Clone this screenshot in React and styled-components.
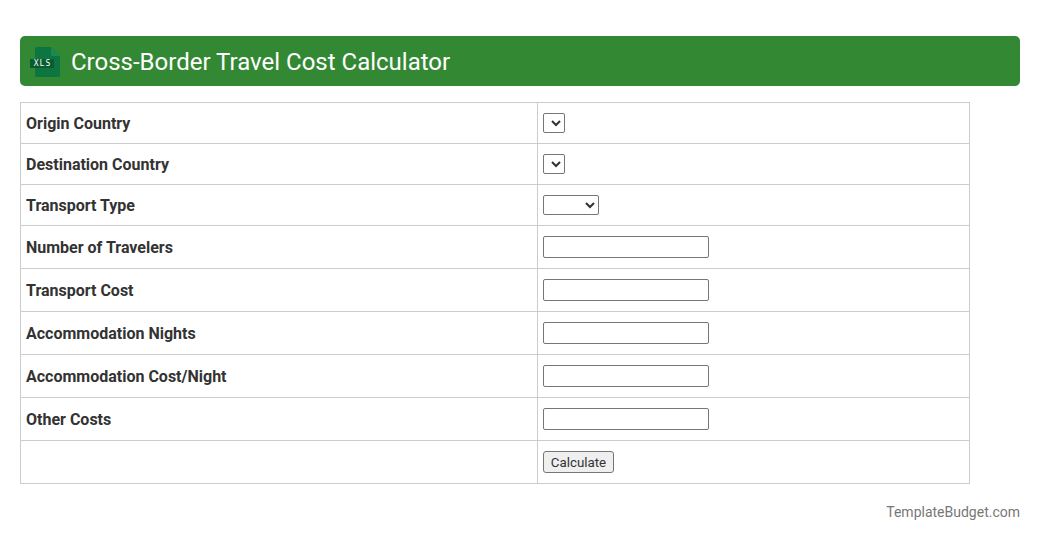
import React from "react";
import styled, { createGlobalStyle } from "styled-components";

const GlobalStyle = createGlobalStyle`
  html, body {
    margin: 0;
    padding: 0;
    background: #fff;
    color: #333;
    font-family: Roboto, "Liberation Sans", sans-serif;
  }
`;

const Page = styled.div`
  padding: 36px 20px 0;
  height: 541px;
  box-sizing: border-box;
  overflow: hidden;
`;

const Header = styled.h1`
  display: flex;
  align-items: center;
  gap: 9px;
  height: 50px;
  margin: 0 0 16px;
  padding-left: 10px;
  background: #338833;
  border-radius: 5px;
  color: #fff;
  font-size: 24px;
  font-weight: 400;
`;

const HeaderText = styled.span`
  padding-top: 2px;
`;

const Table = styled.table`
  width: 950px;
  border-collapse: collapse;
  table-layout: fixed;
`;

const Cell = styled.td`
  border: 1px solid #ccc;
  padding: 0 5px;
  height: ${props => props.$h}px;
  box-sizing: border-box;
  font-size: 16px;
  line-height: 20px;
`;

const LabelCell = styled(Cell)`
  width: 517px;
  padding-top: 2px;
  font-weight: 700;
  color: #333;
`;

const Select = styled.select`
  display: block;
  width: ${props => props.$w}px;
  height: 20px;
  padding: 0;
  font-size: 13.33px;
  font-family: Arial, "Liberation Sans", sans-serif;
  color: #333;
  background: #fff;
  border: 1px solid #767676;
  border-radius: 2px;
`;

const Input = styled.input`
  display: block;
  width: 166px;
  height: 22px;
  box-sizing: border-box;
  padding: 1px 2px;
  background: #fff;
  border: 1px solid #767676;
  border-radius: 2px;
`;

const Button = styled.button`
  display: block;
  height: 22px;
  width: 71px;
  padding: 0;
  font-family: Roboto, sans-serif;
  font-size: 13.33px;
  color: #333;
  background: #efefef;
  border: 1px solid #767676;
  border-radius: 3px;
`;

const Footer = styled.div`
  margin-top: 19px;
  text-align: right;
  font-size: 14px;
  line-height: 18px;
  color: #777;
`;

const XlsIcon = () => (
  <svg width="32" height="32" viewBox="0 0 32 32" aria-hidden="true">
    <path d="M5 3.500A1.500 1.500 0 0 1 6.500 2H21l9 9v19.500a1.500 1.500 0 0 1-1.500 1.500h-22A1.500 1.500 0 0 1 5 30.500z" fill="#0c7540" />
    <path d="M21 2l9 9h-7.500A1.500 1.500 0 0 1 21 9.500z" fill="#1c8a50" />
    <rect x="0" y="14" width="24" height="9" fill="#0a5a32" />
    <text x="12.500" y="21" textAnchor="middle" fontFamily="'DejaVu Sans Mono', monospace" fontSize="8" letterSpacing="1" fill="#fff">XLS</text>
  </svg>
);

const rows = [
  ["Origin Country", "select", 22, 41],
  ["Destination Country", "select", 22, 41],
  ["Transport Type", "select", 56, 41],
  ["Number of Travelers", "input", 0, 43],
  ["Transport Cost", "input", 0, 43],
  ["Accommodation Nights", "input", 0, 43],
  ["Accommodation Cost/Night", "input", 0, 43],
  ["Other Costs", "input", 0, 43],
];

export default function App() {
  return (
    <Page>
      <GlobalStyle />
      <Header>
        <XlsIcon />
        <HeaderText>Cross-Border Travel Cost Calculator</HeaderText>
      </Header>
      <Table>
        <tbody>
          {rows.map(([label, kind, w, h]) => (
            <tr key={label}>
              <LabelCell $h={h}>{label}</LabelCell>
              <Cell $h={h}>
                {kind === "select" ? <Select $w={w} /> : <Input type="text" />}
              </Cell>
            </tr>
          ))}
          <tr>
            <LabelCell $h={43} />
            <Cell $h={43}>
              <Button>Calculate</Button>
            </Cell>
          </tr>
        </tbody>
      </Table>
      <Footer>TemplateBudget.com</Footer>
    </Page>
  );
}
